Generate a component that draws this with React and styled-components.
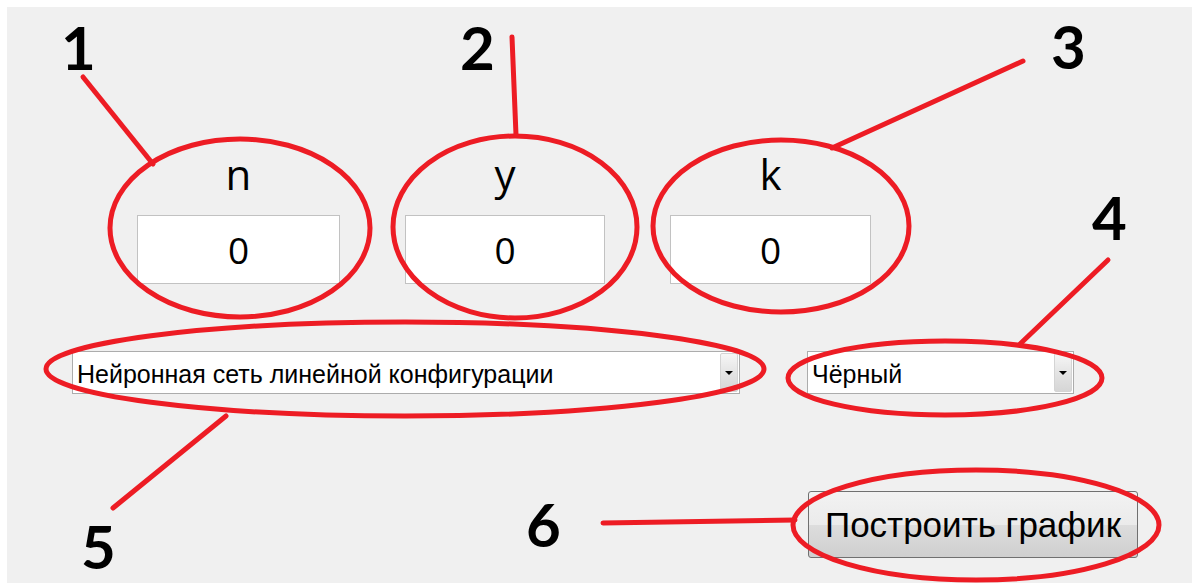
import React from 'react';
import styled, { createGlobalStyle } from 'styled-components';

const GlobalStyle = createGlobalStyle`
  html, body {
    margin: 0;
    padding: 0;
    background: #fff;
  }
`;

const Page = styled.div`
  position: relative;
  width: 1194px;
  height: 585px;
  overflow: hidden;
  background: #fff;
`;

const Form = styled.div`
  margin: 7px 2px 0 7px;
  height: 576px;
  background: #f0f0f0;
  display: flex;
  flex-direction: column;
  box-sizing: border-box;
  padding-top: 145px;
`;

const FieldsRow = styled.div`
  display: flex;
  gap: 65px;
  padding-left: 130px;
`;

const Field = styled.div`
  width: ${p => p.width}px;
  display: flex;
  flex-direction: column;
  align-items: center;
  gap: 19px;
`;

const FieldLabel = styled.div`
  font-family: "Open Sans", "DejaVu Sans", sans-serif;
  font-size: 42px;
  line-height: 44px;
  color: #000;
  height: 44px;
`;

const NumberBox = styled.div`
  width: 100%;
  height: 69px;
  box-sizing: border-box;
  background: #fff;
  border: 1px solid #c2c2c2;
  display: flex;
  align-items: center;
  justify-content: center;
  font-family: "Open Sans", "DejaVu Sans", sans-serif;
  font-size: 37px;
  color: #000;
`;

const ComboRow = styled.div`
  display: flex;
  gap: 67px;
  padding-left: 65px;
  margin-top: 67px;
`;

const Combo = styled.div`
  width: ${p => p.width}px;
  height: 43px;
  box-sizing: border-box;
  background: #fff;
  border: 1px solid #acacac;
  display: flex;
  align-items: center;
  padding: 1px;
`;

const ComboText = styled.div`
  flex: 1;
  font-family: "Liberation Sans", Arial, sans-serif;
  font-size: 25px;
  color: #000;
  padding: 3px 0 0 3px;
  white-space: nowrap;
`;

const ComboArrow = styled.div`
  width: 18px;
  align-self: stretch;
  box-sizing: border-box;
  border: 1px solid #d4d4d4;
  border-radius: 2px;
  background: linear-gradient(#f6f6f6, #e4e4e4 50%, #d6d6d6);
  display: flex;
  align-items: center;
  justify-content: center;

  &::after {
    content: '';
    border-left: 4px solid transparent;
    border-right: 4px solid transparent;
    border-top: 4px solid #000;
  }
`;

const ButtonRow = styled.div`
  display: flex;
  padding-left: 801px;
  margin-top: 97px;
`;

const PlotButton = styled.button`
  width: 330px;
  height: 67px;
  box-sizing: border-box;
  border: 1px solid #707070;
  border-radius: 3px;
  background: linear-gradient(#f2f2f2, #ebebeb 50%, #dddddd 51%, #cfcfcf);
  font-family: "Liberation Sans", Arial, sans-serif;
  font-size: 35px;
  color: #000;
  padding: 0;
`;

const Marks = styled.svg`
  position: absolute;
  left: 0;
  top: 0;
  pointer-events: none;
`;

const Tag = styled.span`
  position: absolute;
  left: ${p => p.x}px;
  top: ${p => p.y}px;
  font-family: Lato, "Open Sans", sans-serif;
  font-weight: 700;
  font-size: 60px;
  line-height: 60px;
  color: #000;
`;

const RED = '#ed1c24';

const rings = [
  { cx: 240, cy: 228, rx: 130, ry: 89 },
  { cx: 515, cy: 227, rx: 122, ry: 91 },
  { cx: 781, cy: 226, rx: 128, ry: 86 },
  { cx: 945, cy: 378, rx: 157, ry: 37 },
  { cx: 405, cy: 369, rx: 359, ry: 47 },
  { cx: 976, cy: 525, rx: 183, ry: 55 },
];

const leaders = [
  [83, 77, 153, 164],
  [512, 37, 516, 135],
  [1023, 61, 832, 148],
  [1108, 260, 1020, 344],
  [113, 508, 226, 416],
  [603, 523, 795, 520],
];

const tags = [
  { n: 1, x: 61, y: 17 },
  { n: 2, x: 460, y: 17 },
  { n: 3, x: 1051, y: 16 },
  { n: 4, x: 1092, y: 187 },
  { n: 5, x: 81, y: 516 },
  { n: 6, x: 526, y: 494 },
];

const fields = [
  { name: 'n', width: 203 },
  { name: 'y', width: 200 },
  { name: 'k', width: 201 },
];

export default function App() {
  return (
    <Page>
      <GlobalStyle />
      <Form>
        <FieldsRow>
          {fields.map(f => (
            <Field key={f.name} width={f.width}>
              <FieldLabel>{f.name}</FieldLabel>
              <NumberBox>0</NumberBox>
            </Field>
          ))}
        </FieldsRow>
        <ComboRow>
          <Combo width={668}>
            <ComboText>Нейронная сеть линейной конфигурации</ComboText>
            <ComboArrow />
          </Combo>
          <Combo width={267}>
            <ComboText>Чёрный</ComboText>
            <ComboArrow />
          </Combo>
        </ComboRow>
        <ButtonRow>
          <PlotButton>Построить график</PlotButton>
        </ButtonRow>
      </Form>

      <Marks width="1194" height="585">
        {rings.map((r, i) => (
          <ellipse key={i} {...r} fill="none" stroke={RED} strokeWidth="5" />
        ))}
        {leaders.map(([x1, y1, x2, y2], i) => (
          <line key={i} x1={x1} y1={y1} x2={x2} y2={y2} stroke={RED} strokeWidth="5" strokeLinecap="round" />
        ))}
      </Marks>
      {tags.map(t => (
        <Tag key={t.n} x={t.x} y={t.y}>{t.n}</Tag>
      ))}
    </Page>
  );
}
